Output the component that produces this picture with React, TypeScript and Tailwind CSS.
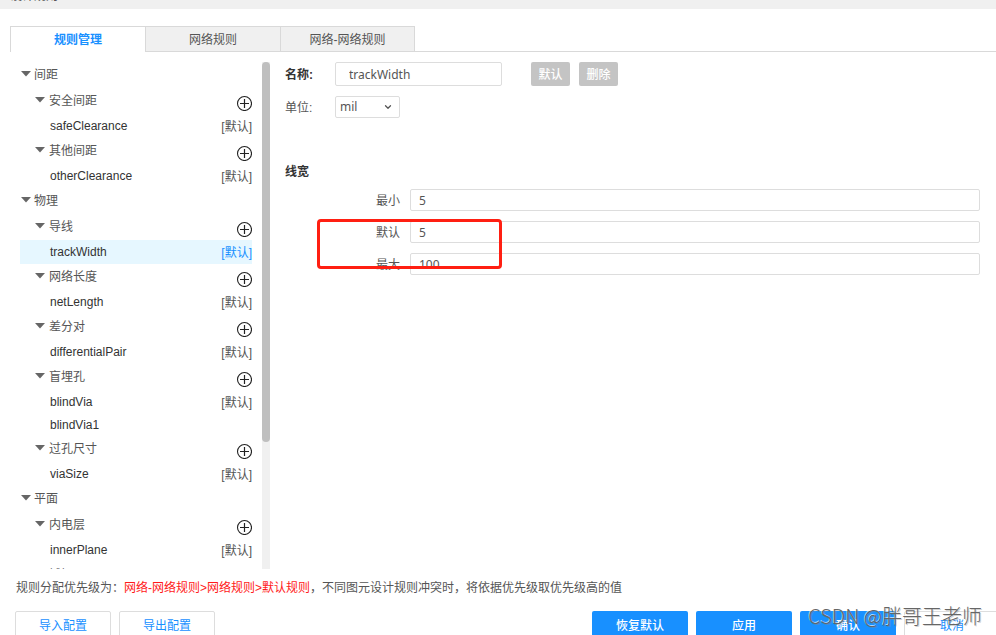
import { useState } from "react";
import { ChevronDown } from "lucide-react";
import clsx from "clsx";

type Rule = { name: string; isDefault?: boolean };
type RuleGroup = { label: string; rules: Rule[] };
type RuleSection = { label: string; groups: RuleGroup[] };

const TABS = ["规则管理", "网络规则", "网络-网络规则"];

const SECTIONS: RuleSection[] = [
  {
    label: "间距",
    groups: [
      { label: "安全间距", rules: [{ name: "safeClearance", isDefault: true }] },
      { label: "其他间距", rules: [{ name: "otherClearance", isDefault: true }] },
    ],
  },
  {
    label: "物理",
    groups: [
      { label: "导线", rules: [{ name: "trackWidth", isDefault: true }] },
      { label: "网络长度", rules: [{ name: "netLength", isDefault: true }] },
      { label: "差分对", rules: [{ name: "differentialPair", isDefault: true }] },
      { label: "盲埋孔", rules: [{ name: "blindVia", isDefault: true }, { name: "blindVia1" }] },
      { label: "过孔尺寸", rules: [{ name: "viaSize", isDefault: true }] },
    ],
  },
  {
    label: "平面",
    groups: [
      { label: "内电层", rules: [{ name: "innerPlane", isDefault: true }] },
      { label: "铺铜", rules: [] },
    ],
  },
];

const WIDTH_FIELDS = [
  { id: "min", label: "最小", value: "5" },
  { id: "default", label: "默认", value: "5" },
  { id: "max", label: "最大", value: "100" },
];

function Caret() {
  return (
    <svg width="10" height="6" viewBox="0 0 10 6" className="shrink-0" aria-hidden="true">
      <path d="M0 0h10L5 5.5z" fill="#666" />
    </svg>
  );
}

function AddButton({ label }: { label: string }) {
  return (
    <button type="button" aria-label={`添加${label}`} className="mt-[7px] h-4 w-4">
      <svg width="16" height="16" viewBox="0 0 16 16" fill="none" stroke="#222">
        <circle cx="8.5" cy="8.5" r="7" strokeWidth="1.1" />
        <path d="M4 8.5h9M8.5 4v9" strokeWidth="1.2" />
      </svg>
    </button>
  );
}

function RuleRow({ rule, active, onSelect }: { rule: Rule; active: boolean; onSelect: () => void }) {
  return (
    <button
      type="button"
      onClick={onSelect}
      className={clsx(
        "flex w-full items-center justify-between pl-[30px] text-left",
        rule.isDefault ? "h-6" : "h-[22px]",
        active && "bg-[#e6f7ff]"
      )}
    >
      <span className="text-[#333]">{rule.name}</span>
      {rule.isDefault && <span className={clsx("pt-0.5", active ? "text-[#1890ff]" : "text-[#555]")}>[默认]</span>}
    </button>
  );
}

function RuleTree({ selected, onSelect }: { selected: string; onSelect: (name: string) => void }) {
  return (
    <div className="w-[232px] shrink-0 overflow-hidden">
      {SECTIONS.map((section) => (
        <div key={section.label}>
          <div className="h-[26px]">
            <button type="button" className="flex h-6 items-center gap-[3px] pl-px">
              <Caret />
              <span className="pt-0.5">{section.label}</span>
            </button>
          </div>
          {section.groups.map((group) => (
            <div key={group.label}>
              <div className="flex h-[26px] items-start justify-between">
                <button type="button" className="flex h-6 items-center gap-1 pl-[15px]">
                  <Caret />
                  <span className="pt-0.5">{group.label}</span>
                </button>
                <AddButton label={group.label} />
              </div>
              {group.rules.map((rule) => (
                <RuleRow
                  key={rule.name}
                  rule={rule}
                  active={rule.name === selected}
                  onSelect={() => onSelect(rule.name)}
                />
              ))}
            </div>
          ))}
        </div>
      ))}
    </div>
  );
}

const inputClass =
  "rounded-xs border border-[#ddd] bg-white font-['Noto_Sans','Noto_Sans_CJK_SC',sans-serif] text-[#555] outline-none";
const grayButtonClass = "h-6 w-[39px] rounded-xs bg-[#c4c4c4] pt-0.5 font-medium text-white";
const outlineButtonClass = "h-[30px] w-24 rounded-xs border border-[#ddd] bg-white text-[#1890ff]";
const primaryButtonClass = "h-[30px] w-24 rounded-xs bg-[#1890ff] font-medium text-white";

export default function App() {
  const [tab, setTab] = useState(TABS[0]);
  const [selected, setSelected] = useState("trackWidth");

  return (
    <div className="relative flex h-screen flex-col overflow-hidden bg-white font-['Liberation_Sans','Noto_Sans_CJK_SC',sans-serif] text-xs text-[#555]">
      <header className="flex h-[9px] shrink-0 items-end overflow-hidden bg-[#f0f0f0] pb-[7px] pl-[10px]">
        <h1 className="leading-3">设计规则</h1>
      </header>

      <nav className="mt-[17px] flex h-[26px] shrink-0 pl-[10px]">
        {TABS.map((item) => (
          <button
            key={item}
            type="button"
            onClick={() => setTab(item)}
            className={clsx(
              "w-[135px] border-t border-l border-[#d9d9d9] last-of-type:border-r",
              item === tab ? "bg-white font-bold text-[#1890ff]" : "border-b bg-[#f0f0f0] pt-0.5"
            )}
          >
            {item}
          </button>
        ))}
        <div className="flex-1 border-b border-[#d9d9d9]" />
      </nav>

      <main className="mt-[10px] flex min-h-0 flex-1 pb-px pl-5">
        <RuleTree selected={selected} onSelect={setSelected} />
        <div className="ml-[10px] w-2 shrink-0 bg-[#f0f0f0]">
          <div className="h-3/4 rounded-full bg-[#bfbfbf]" />
        </div>

        <form className="relative ml-[15px] flex-1 pr-4" onSubmit={(event) => event.preventDefault()}>
          <div className="flex h-6 items-center">
            <label htmlFor="rule-name" className="w-[50px] pt-0.5 font-bold text-[#333]">
              名称:
            </label>
            <input
              id="rule-name"
              key={selected}
              defaultValue={selected}
              className={clsx(inputClass, "h-6 w-[167px] px-[13px]")}
            />
            <div className="ml-[29px] flex gap-[9px]">
              <button type="button" className={grayButtonClass}>默认</button>
              <button type="button" className={grayButtonClass}>删除</button>
            </div>
          </div>

          <div className="mt-[10px] flex h-[22px] items-center">
            <label htmlFor="rule-unit" className="w-[50px] pt-0.5">
              单位:
            </label>
            <div className="relative">
              <select id="rule-unit" className={clsx(inputClass, "block h-[22px] w-[65px] appearance-none pl-1")}>
                <option>mil</option>
                <option>mm</option>
              </select>
              <ChevronDown size={10} strokeWidth={3} className="pointer-events-none absolute top-[6px] right-[7px]" />
            </div>
          </div>

          <h2 className="mt-[46px] font-bold text-[#333]">线宽</h2>
          <div className="mt-[9px] flex flex-col gap-[10px]">
            {WIDTH_FIELDS.map((field) => (
              <div key={field.id} className="flex items-center">
                <label htmlFor={`width-${field.id}`} className="w-[115px] pt-0.5 text-right">
                  {field.label}
                </label>
                <input
                  id={`width-${field.id}`}
                  defaultValue={field.value}
                  className={clsx(inputClass, "ml-[10px] h-[22px] min-w-0 flex-1 px-2")}
                />
              </div>
            ))}
          </div>

          {/* highlight around the default width */}
          <div className="pointer-events-none absolute top-[157px] left-8 h-[50px] w-[185px] rounded-sm border-3 border-[#ff1f12]" />
        </form>
      </main>

      <footer className="shrink-0 pt-[6px] pl-[15px]">
        <p className="pl-px leading-6">
          规则分配优先级为：<span className="text-[#ff1a1a]">网络-网络规则&gt;网络规则&gt;默认规则</span>
          ，不同图元设计规则冲突时，将依据优先级取优先级高的值
        </p>
        <div className="mt-[11px] -mr-1 -mb-[6px] flex justify-between">
          <div className="flex gap-2">
            <button type="button" className={outlineButtonClass}>导入配置</button>
            <button type="button" className={outlineButtonClass}>导出配置</button>
          </div>
          <div className="flex gap-2">
            <button type="button" className={primaryButtonClass}>恢复默认</button>
            <button type="button" className={primaryButtonClass}>应用</button>
            <button type="button" className={primaryButtonClass}>确认</button>
            <button type="button" className={outlineButtonClass}>取消</button>
          </div>
        </div>
      </footer>

      <div className="pointer-events-none absolute right-[14px] bottom-[3px] font-['Noto_Sans_CJK_SC',sans-serif] text-xl leading-8 font-light text-[#666] [text-shadow:1px_1px_0_#88888860,-1px_-1px_0_#ffffffa0]">
        CSDN @胖哥王老师
      </div>
    </div>
  );
}
